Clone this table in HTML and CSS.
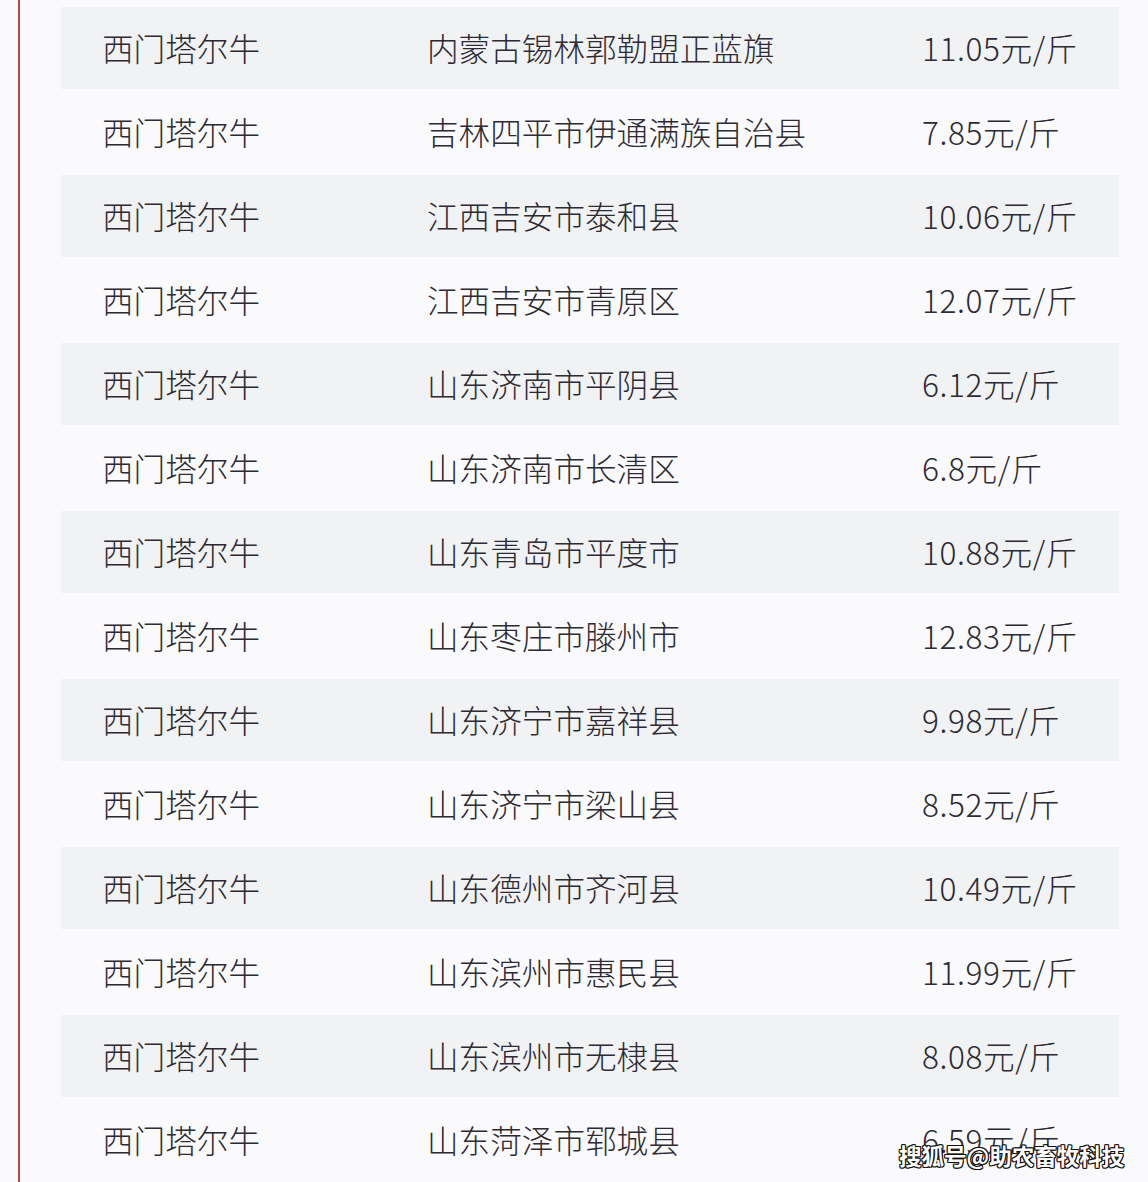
FILE: index.html
```html
<!DOCTYPE html>
<html lang="zh">
<head>
<meta charset="utf-8">
<link rel="stylesheet" href="styles.css">
</head>
<body>
<div class="page">
  <div class="table">
    <div class="row gray"><span>西门塔尔牛</span><span>内蒙古锡林郭勒盟正蓝旗</span><span class="price">11.05元/斤</span></div>
    <div class="row"><span>西门塔尔牛</span><span>吉林四平市伊通满族自治县</span><span class="price">7.85元/斤</span></div>
    <div class="row gray"><span>西门塔尔牛</span><span>江西吉安市泰和县</span><span class="price">10.06元/斤</span></div>
    <div class="row"><span>西门塔尔牛</span><span>江西吉安市青原区</span><span class="price">12.07元/斤</span></div>
    <div class="row gray"><span>西门塔尔牛</span><span>山东济南市平阴县</span><span class="price">6.12元/斤</span></div>
    <div class="row"><span>西门塔尔牛</span><span>山东济南市长清区</span><span class="price">6.8元/斤</span></div>
    <div class="row gray"><span>西门塔尔牛</span><span>山东青岛市平度市</span><span class="price">10.88元/斤</span></div>
    <div class="row"><span>西门塔尔牛</span><span>山东枣庄市滕州市</span><span class="price">12.83元/斤</span></div>
    <div class="row gray"><span>西门塔尔牛</span><span>山东济宁市嘉祥县</span><span class="price">9.98元/斤</span></div>
    <div class="row"><span>西门塔尔牛</span><span>山东济宁市梁山县</span><span class="price">8.52元/斤</span></div>
    <div class="row gray"><span>西门塔尔牛</span><span>山东德州市齐河县</span><span class="price">10.49元/斤</span></div>
    <div class="row"><span>西门塔尔牛</span><span>山东滨州市惠民县</span><span class="price">11.99元/斤</span></div>
    <div class="row gray"><span>西门塔尔牛</span><span>山东滨州市无棣县</span><span class="price">8.08元/斤</span></div>
    <div class="row"><span>西门塔尔牛</span><span>山东菏泽市郓城县</span><span class="price">6.59元/斤</span></div>
  </div>
  <div class="watermark">搜狐号@助农畜牧科技</div>
</div>
</body>
</html>
```

FILE: styles.css
```css
html, body {
  margin: 0;
  padding: 0;
  background: #fafafc;
}
.page {
  position: relative;
  width: 1148px;
  height: 1182px;
  overflow: hidden;
  box-sizing: border-box;
  padding: 7px 29px 0 61px;
  font-family: "Microsoft YaHei", "Noto Sans CJK SC", "Noto Sans", sans-serif;
}
.page::before {
  content: "";
  position: absolute;
  left: 18px;
  top: 0;
  bottom: 0;
  width: 2px;
  background: #b24a48;
}
.table {
  display: flex;
  flex-direction: column;
}
.row {
  display: grid;
  grid-template-columns: 325px 495px 1fr;
  align-items: center;
  height: 86px;
  padding-left: 41px;
  font-size: 31.6px;
  font-weight: 300;
  color: #2d2a33;
  line-height: 1;
}
.row.gray {
  height: 82px;
  background: #f1f2f4;
}
.price {
  letter-spacing: 0.6px;
}
.watermark {
  position: absolute;
  left: 899px;
  top: 1142px;
  font-size: 22.5px;
  font-weight: 700;
  color: #ffffff;
  line-height: 1.2;
  text-shadow:
    -1px -1px 0 #111, 1px -1px 0 #111, -1px 1px 0 #111, 1px 1px 0 #111,
    0 -1px 0 #111, 0 1px 0 #111, -1px 0 0 #111, 1px 0 0 #111;
}
```
